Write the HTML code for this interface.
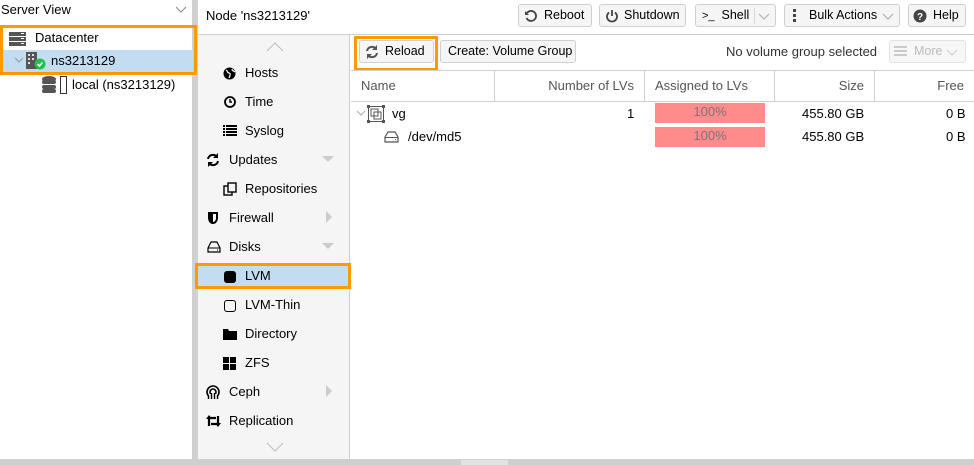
<!DOCTYPE html><html><head><style>
*{box-sizing:border-box;margin:0;padding:0}
body{width:974px;height:465px;position:relative;overflow:hidden;background:#fff;font-family:"Liberation Sans",sans-serif;font-size:13px;color:#000}
.a{position:absolute;white-space:nowrap}
.btn{position:absolute;height:23px;border:1px solid #cfcfcf;background:#f5f5f5;border-radius:3px;line-height:21px;padding:0 7px;color:#000;white-space:nowrap;overflow:hidden;font-size:12.5px}
.mi{position:absolute;left:198px;width:152px;height:29px;line-height:29px}
.ic{position:absolute;top:0}
.hd{position:absolute;top:71px;height:31px;line-height:30px;color:#555;padding:0 10px;border-right:1px solid #d0d0d0}
.bar{position:absolute;left:655px;width:110px;height:20px;background:#ff8b8b;color:#777;text-align:center;line-height:18px}
.arr{position:absolute;right:16px;top:0}
</style></head><body>
<div class="a" style="left:1px;top:2px">Server View</div>
<svg class="a" style="left:175px;top:6px" width="12" height="8"><path d="M1 1l5 5 5-5" stroke="#888" fill="none"/></svg>
<div class="a" style="left:192px;top:0;width:6px;height:465px;background:#d0d0d0"></div>
<div class="a" style="left:3px;top:50px;width:190px;height:22px;background:#c2ddf2"></div>
<div class="a" style="left:0;top:25px;width:197px;height:50px;border:3px solid #ff9900"></div>
<svg class="a" style="left:9px;top:31px" width="18" height="16"><g fill="#555"><rect x="0" y="1" width="17" height="4"/><rect x="0" y="6" width="17" height="4"/><rect x="0" y="11" width="17" height="4"/></g><g fill="#fff"><rect x="12" y="2" width="3" height="1"/><rect x="12" y="7" width="3" height="1"/><rect x="12" y="12" width="3" height="1"/></g></svg>
<div class="a" style="left:35px;top:30px">Datacenter</div>
<svg class="a" style="left:14px;top:57px" width="10" height="8"><path d="M1 1l4 4 4-4" stroke="#999" fill="none"/></svg>
<svg class="a" style="left:26px;top:52px" width="20" height="18"><rect x="0" y="0" width="11" height="17" fill="#555"/><g fill="#ddd"><rect x="2" y="2" width="2" height="2"/><rect x="6" y="2" width="2" height="2"/><rect x="2" y="6" width="2" height="2"/><rect x="6" y="6" width="2" height="2"/><rect x="2" y="10" width="2" height="2"/></g><circle cx="14" cy="12" r="5.5" fill="#21bf4b"/><path d="M11.5 12l2 2 3-3.5" stroke="#fff" stroke-width="1.5" fill="none"/></svg>
<div class="a" style="left:51px;top:53px">ns3213129</div>
<svg class="a" style="left:42px;top:76px" width="28" height="18"><g fill="#555"><ellipse cx="7" cy="3" rx="7" ry="3"/><rect x="0" y="4" width="14" height="4" rx="2"/><rect x="0" y="9" width="14" height="4" rx="2"/><rect x="0" y="13" width="14" height="4" rx="2"/></g><rect x="18.5" y="0.5" width="6" height="17" fill="none" stroke="#333"/></svg>
<div class="a" style="left:72px;top:77px">local (ns3213129)</div>
<div class="a" style="left:206px;top:8px">Node 'ns3213129'</div>
<div class="a" style="left:198px;top:34px;width:776px;height:1px;background:#cfcfcf"></div>
<div class="btn" style="left:518px;top:4px;width:74px;padding-left:25px">Reboot</div>
<svg class="a" style="left:524px;top:9px" width="14" height="14"><path d="M3 4A5 5 0 1 1 2.5 9" stroke="#444" stroke-width="1.8" fill="none"/><path d="M1 2v4h4z" fill="#444"/></svg>
<div class="btn" style="left:599px;top:4px;width:87px;padding-left:24px">Shutdown</div>
<svg class="a" style="left:605px;top:9px" width="14" height="14"><path d="M4 3.5A5 5 0 1 0 10 3.5" stroke="#444" stroke-width="1.8" fill="none"/><path d="M7 1v6" stroke="#444" stroke-width="1.8"/></svg>
<div class="btn" style="left:695px;top:4px;width:81px;padding-left:6px"><span style="font-size:11px">&gt;_</span>&nbsp; Shell</div>
<div class="a" style="left:754px;top:8px;width:1px;height:16px;background:#d8d8d8"></div>
<svg class="a" style="left:758px;top:13px" width="12" height="8"><path d="M1 1l5 5 5-5" stroke="#aaa" fill="none"/></svg>
<div class="btn" style="left:784px;top:4px;width:116px;padding-left:24px">Bulk Actions</div>
<svg class="a" style="left:793px;top:9px" width="4" height="14"><g fill="#444"><rect x="0" y="0" width="3" height="3"/><rect x="0" y="5" width="3" height="3"/><rect x="0" y="10" width="3" height="3"/></g></svg>
<svg class="a" style="left:882px;top:13px" width="12" height="8"><path d="M1 1l5 5 5-5" stroke="#aaa" fill="none"/></svg>
<div class="btn" style="left:908px;top:4px;width:58px;padding-left:24px">Help</div>
<svg class="a" style="left:913px;top:9px" width="14" height="14"><circle cx="7" cy="7" r="6.5" fill="#444"/><text x="7" y="11" font-size="10" font-weight="bold" fill="#fff" text-anchor="middle" font-family="Liberation Sans">?</text></svg>
<div class="a" style="left:198px;top:35px;width:152px;height:424px;background:#f5f5f5;border-right:1px solid #d0d0d0"></div>
<svg class="a" style="left:266px;top:42px" width="18" height="10"><path d="M1 9l8-8 8 8" stroke="#bbb" fill="none"/></svg>
<svg class="a" style="left:266px;top:442px" width="18" height="10"><path d="M1 1l8 8 8-8" stroke="#bbb" fill="none"/></svg>
<div class="a" style="left:198px;top:265px;width:150px;height:21px;background:#c2ddf2"></div>
<div class="a" style="left:195px;top:263px;width:156px;height:26px;border:3px solid #ff9900"></div>
<div class="mi" style="top:58px"><svg class="ic" style="left:25px;top:9px" width="13" height="13"><circle cx="6.5" cy="6.5" r="6" fill="#000"/><path d="M3 3c2 1 1 3 3 3s1 3 0 5M9 2c0 2 2 2 3 3" stroke="#fff" stroke-width="1.2" fill="none"/></svg><span class="a" style="left:47px">Hosts</span></div>
<div class="mi" style="top:87px"><svg class="ic" style="left:26px;top:9px" width="12" height="12"><circle cx="6" cy="6" r="5" stroke="#000" stroke-width="1.8" fill="none"/><path d="M6 3v3h2" stroke="#000" stroke-width="1.4" fill="none"/></svg><span class="a" style="left:47px">Time</span></div>
<div class="mi" style="top:116px"><svg class="ic" style="left:25px;top:9px" width="14" height="12"><g fill="#000"><rect x="0" y="0" width="2" height="2"/><rect x="3" y="0" width="11" height="2"/><rect x="0" y="3" width="2" height="2"/><rect x="3" y="3" width="11" height="2"/><rect x="0" y="6" width="2" height="2"/><rect x="3" y="6" width="11" height="2"/><rect x="0" y="9" width="2" height="2"/><rect x="3" y="9" width="11" height="2"/></g></svg><span class="a" style="left:47px">Syslog</span></div>
<div class="mi" style="top:145px"><svg class="ic" style="left:8px;top:8px" width="14" height="14"><path d="M2 6A5 5 0 0 1 11 4M12 8A5 5 0 0 1 3 10" stroke="#000" stroke-width="2" fill="none"/><path d="M12 0v5H7zM2 14V9h5z" fill="#000"/></svg><span class="a" style="left:31px">Updates</span><svg class="arr" style="top:11px" width="12" height="7"><path d="M0 0h12L6 6z" fill="#ccc"/></svg></div>
<div class="mi" style="top:174px"><svg class="ic" style="left:25px;top:8px" width="14" height="14"><rect x="1" y="4" width="8" height="9" fill="none" stroke="#000" stroke-width="1.4"/><rect x="5" y="1" width="8" height="9" fill="#f5f5f5" stroke="#000" stroke-width="1.4"/></svg><span class="a" style="left:47px">Repositories</span></div>
<div class="mi" style="top:203px"><svg class="ic" style="left:10px;top:9px" width="11" height="13"><path d="M0 0h10v6a5 6 0 0 1-10 0z" fill="#000"/><path d="M5 2h3v4a3 4 0 0 1-3 4z" fill="#fff"/></svg><span class="a" style="left:31px">Firewall</span><svg class="arr" style="top:8px;right:17px" width="7" height="12"><path d="M0 0v12l6-6z" fill="#ccc"/></svg></div>
<div class="mi" style="top:232px"><svg class="ic" style="left:9px;top:9px" width="14" height="12"><path d="M1 7l3-6h6l3 6v4H1z" fill="none" stroke="#000" stroke-width="1.2"/><path d="M1 7h12" stroke="#000"/><rect x="10" y="8.5" width="1" height="1"/></svg><span class="a" style="left:31px">Disks</span><svg class="arr" style="top:11px" width="12" height="7"><path d="M0 0h12L6 6z" fill="#ccc"/></svg></div>
<div class="mi" style="top:261px"><div class="ic" style="left:26px;top:10px;width:12px;height:12px;background:#000;border-radius:3px"></div><span class="a" style="left:47px">LVM</span></div>
<div class="mi" style="top:290px"><div class="ic" style="left:26px;top:10px;width:12px;height:12px;border:1.5px solid #000;border-radius:3px"></div><span class="a" style="left:47px">LVM-Thin</span></div>
<div class="mi" style="top:319px"><svg class="ic" style="left:25px;top:9px" width="14" height="12"><path d="M0 1h5l1 2h8v9H0z" fill="#000"/></svg><span class="a" style="left:47px">Directory</span></div>
<div class="mi" style="top:348px"><svg class="ic" style="left:25px;top:9px" width="14" height="13"><g fill="#000"><rect x="0" y="0" width="6" height="6"/><rect x="7" y="0" width="6" height="6"/><rect x="0" y="7" width="6" height="6"/><rect x="7" y="7" width="6" height="6"/></g></svg><span class="a" style="left:47px">ZFS</span></div>
<div class="mi" style="top:377px"><svg class="ic" style="left:8px;top:8px" width="15" height="15"><circle cx="7" cy="7" r="6" stroke="#000" stroke-width="1.6" fill="none"/><circle cx="7" cy="7" r="3" stroke="#000" stroke-width="1.6" fill="none"/><rect x="3" y="9" width="8" height="6" fill="#f5f5f5"/><path d="M2.5 10v4M11.5 10v4M5.5 8v6M8.5 8v6" stroke="#000" stroke-width="1.4"/></svg><span class="a" style="left:31px">Ceph</span><svg class="arr" style="top:8px;right:17px" width="7" height="12"><path d="M0 0v12l6-6z" fill="#ccc"/></svg></div>
<div class="mi" style="top:406px"><svg class="ic" style="left:8px;top:9px" width="15" height="12"><path d="M3 11V3h7M12 1v8H5" stroke="#000" stroke-width="2.2" fill="none"/><path d="M0 4l3-4 3 4zM9 8l3 4 3-4z" fill="#000"/></svg><span class="a" style="left:31px">Replication</span></div>
<div class="btn" style="left:359px;top:40px;width:75px;padding-left:25px">Reload</div>
<svg class="a" style="left:365px;top:45px" width="14" height="14"><path d="M2 6A5 5 0 0 1 11 4M12 8A5 5 0 0 1 3 10" stroke="#555" stroke-width="2" fill="none"/><path d="M12 0v5H7zM2 14V9h5z" fill="#555"/></svg>
<div class="a" style="left:354px;top:36px;width:84px;height:35px;border:3px solid #ff9900"></div>
<div class="btn" style="left:440px;top:40px;width:136px">Create: Volume Group</div>
<div class="a" style="left:726px;top:44px;color:#333">No volume group selected</div>
<div class="btn" style="left:889px;top:40px;width:77px;padding-left:24px;color:#bbb;border-color:#e2e2e2;background:#f7f7f7">More</div>
<svg class="a" style="left:894px;top:46px" width="14" height="12"><path d="M0 1h13M0 5h13M0 9h13" stroke="#bbb" stroke-width="1.6"/></svg>
<svg class="a" style="left:946px;top:49px" width="12" height="8"><path d="M1 1l5 5 5-5" stroke="#ccc" fill="none"/></svg>
<div class="a" style="left:351px;top:70px;width:623px;height:1px;background:#d0d0d0"></div>
<div class="a" style="left:351px;top:101px;width:623px;height:1px;background:#d0d0d0"></div>
<div class="hd" style="left:351px;width:144px">Name</div>
<div class="hd" style="left:495px;width:150px;text-align:right">Number of LVs</div>
<div class="hd" style="left:645px;width:130px">Assigned to LVs</div>
<div class="hd" style="left:775px;width:100px;text-align:right">Size</div>
<div class="hd" style="left:875px;width:99px;text-align:right;border:none">Free</div>
<svg class="a" style="left:356px;top:110px" width="10" height="8"><path d="M1 1l4 4 4-4" stroke="#aaa" fill="none"/></svg>
<svg class="a" style="left:367px;top:105px" width="18" height="18"><rect x="1.5" y="1.5" width="15" height="15" fill="none" stroke="#555"/><rect x="4" y="4" width="7" height="7" fill="none" stroke="#555"/><rect x="7" y="7" width="7" height="7" fill="none" stroke="#555"/><g fill="#555"><rect x="0" y="0" width="3" height="3"/><rect x="15" y="0" width="3" height="3"/><rect x="0" y="15" width="3" height="3"/><rect x="15" y="15" width="3" height="3"/></g></svg>
<div class="a" style="left:392px;top:106px">vg</div>
<div class="a" style="left:627px;top:106px">1</div>
<div class="bar" style="top:103px">100%</div>
<div class="a" style="left:802px;top:106px">455.80 GB</div>
<div class="a" style="left:946px;top:106px">0 B</div>
<svg class="a" style="left:384px;top:131px" width="15" height="12"><path d="M1 6l3-5h7l3 5v5H1z" fill="none" stroke="#555" stroke-width="1.2"/><path d="M1 6.5h13" stroke="#555"/><rect x="11" y="8" width="1" height="1" fill="#555"/></svg>
<div class="a" style="left:408px;top:129px">/dev/md5</div>
<div class="bar" style="top:127px">100%</div>
<div class="a" style="left:802px;top:129px">455.80 GB</div>
<div class="a" style="left:946px;top:129px">0 B</div>
<div class="a" style="left:0;top:459px;width:974px;height:6px;background:#cfcfcf"></div>
<div class="a" style="left:461px;top:460px;width:47px;height:5px;background:#e2e2e2"></div>
</body></html>
